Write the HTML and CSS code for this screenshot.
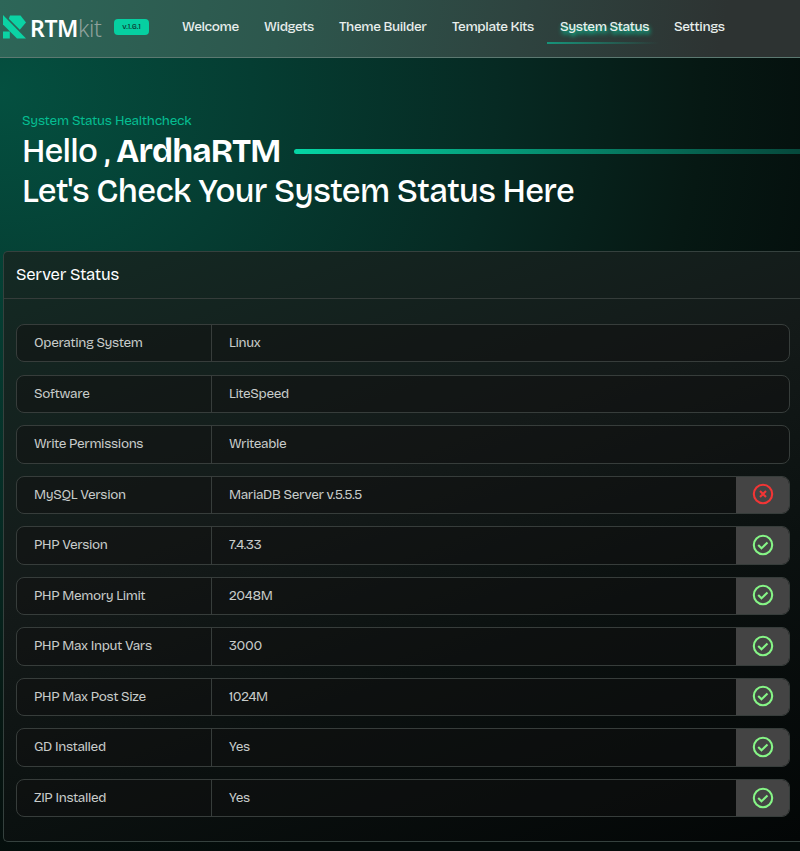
FILE: index.html
```html
<!DOCTYPE html>
<html lang="en">
<head>
<meta charset="utf-8">
<title>RTMkit – System Status</title>
<link rel="stylesheet" href="styles.css">
</head>
<body>
<svg width="0" height="0" class="defs">
  <symbol id="ok" viewBox="0 0 22 22"><circle cx="11" cy="11" r="9.2"/><path d="M6.200 11l3.300 3.200 6-5.600"/></symbol>
  <symbol id="fail" viewBox="0 0 22 22"><circle cx="11" cy="11" r="9.2"/><path d="M8 8l6 6M14 8l-6 6"/></symbol>
</svg>
<header class="topbar">
  <div class="brand">
    <svg class="mark" viewBox="0 0 23 24"><path d="M0 0L23 23.500H14L0 9.500z"/><path d="M7 .5H17.500L23 7.500L16.800 14.700L5.800 3.700z"/><path d="M0 16.500H6.800V23.500H0z"/></svg>
    <span class="name"><b>RTM</b><span class="kit">kit</span></span>
    <span class="version">v.1.6.1</span>
  </div>
  <nav class="nav">
    <a>Welcome</a><a>Widgets</a><a>Theme Builder</a><a>Template Kits</a><a class="active">System Status</a><a>Settings</a>
  </nav>
</header>
<main>
  <section class="hero">
    <p class="eyebrow">System Status Healthcheck</p>
    <div class="hello"><h1>Hello , <b>ArdhaRTM</b></h1><span class="rule"></span></div>
    <h2>Let's Check Your System Status Here</h2>
  </section>
  <section class="panel">
    <h3>Server Status</h3>
    <div class="rows">
      <div class="row"><span class="label">Operating System</span><span class="value">Linux</span></div>
      <div class="row"><span class="label">Software</span><span class="value">LiteSpeed</span></div>
      <div class="row"><span class="label">Write Permissions</span><span class="value">Writeable</span></div>
      <div class="row"><span class="label">MySQL Version</span><span class="value">MariaDB Server v.5.5.5</span><span class="state fail"><svg><use href="#fail"/></svg></span></div>
      <div class="row"><span class="label">PHP Version</span><span class="value">7.4.33</span><span class="state"><svg><use href="#ok"/></svg></span></div>
      <div class="row"><span class="label">PHP Memory Limit</span><span class="value">2048M</span><span class="state"><svg><use href="#ok"/></svg></span></div>
      <div class="row"><span class="label">PHP Max Input Vars</span><span class="value">3000</span><span class="state"><svg><use href="#ok"/></svg></span></div>
      <div class="row"><span class="label">PHP Max Post Size</span><span class="value">1024M</span><span class="state"><svg><use href="#ok"/></svg></span></div>
      <div class="row"><span class="label">GD Installed</span><span class="value">Yes</span><span class="state"><svg><use href="#ok"/></svg></span></div>
      <div class="row"><span class="label">ZIP Installed</span><span class="value">Yes</span><span class="state"><svg><use href="#ok"/></svg></span></div>
    </div>
  </section>
</main>
</body>
</html>
```
FILE: styles.css
```css
* { box-sizing: border-box; margin: 0; }
body {
  height: 851px;
  overflow: hidden;
  font-family: "Bricolage Grotesque", Inter, "Liberation Sans", sans-serif;
  font-weight: 450;
  color: #fff;
  background: radial-gradient(ellipse 900px 800px at 0 90px, #045040 0%, #053d32 28%, #062a23 55%, #061813 78%, #040b0a 100%) #040b0a;
}
.defs { position: absolute; }
.topbar {
  display: flex;
  height: 58px;
  border-bottom: 1px solid #5c7971;
  background: linear-gradient(100deg, #2d6658 0%, #2d574d 35%, #2e433f 65%, #2d3332 90%);
}
.brand { display: flex; align-items: center; width: 169px; height: 54px; padding-left: 3px; flex: none; }
.mark { width: 23px; height: 24px; fill: #0bd3a4; flex: none; }
.name { margin-left: 4px; width: 84px; font-family: "Noto Sans", sans-serif; font-size: 23px; letter-spacing: -0.4px; line-height: 30px; padding-top: 2px; white-space: nowrap; }
.name b { font-weight: 600; }
.kit { font-weight: 300; color: #8fa19c; }
.version { width: 35px; height: 16px; border-radius: 4px; background: #06cfa1; color: #0b4438; font-size: 8px; font-weight: 500; line-height: 16px; text-align: center; }
.nav { display: grid; grid-template-columns: 82px 75px 113px 108px 114px 77px; height: 44px; }
.nav a { padding: 18px 0 0 13px; font-size: 13.5px; line-height: 18px; font-weight: 500; letter-spacing: -.38px; color: #e9efed; white-space: nowrap; }
.nav .active { text-shadow: 1px 3px 4px #00d8a4; background: linear-gradient(90deg, #16947a, transparent) 0 100% / 112px 2px no-repeat; }
.hero { height: 193px; padding: 53px 0 0 22px; }
.eyebrow { font-size: 13.5px; line-height: 20px; letter-spacing: -.23px; color: #05bd91; }
.hello { display: flex; align-items: center; height: 40px; }
h1, h2 { font-size: 33px; line-height: 40px; font-weight: 500; letter-spacing: -.68px; white-space: nowrap; }
h1 { width: 272px; flex: none; letter-spacing: -.8px; }
h1 b { font-weight: 700; }
.rule { flex: 1; height: 5px; border-radius: 3px 0 0 3px; background: linear-gradient(90deg, #05d6a5, #065b4a 85%, #06493c); }
.panel {
  height: 591px;
  margin-left: 3px;
  border: 1px solid #35413e;
  border-right: 0;
  border-radius: 5px 0 0 5px;
  background: linear-gradient(160deg, #142a24 0%, #141a19 40%, #0b1110 65%, #030606 100%);
}
h3 { height: 47px; border-bottom: 1px solid #353c3a; padding-left: 12px; font-size: 16.5px; font-weight: 400; letter-spacing: -.23px; line-height: 45px; }
.rows { display: flex; flex-direction: column; gap: 12.1px; padding: 25px 10px 0 12px; }
.row { display: flex; height: 38.45px; border: 1px solid #373d3b; border-radius: 8px; background: #10101080; overflow: hidden; font-size: 13.5px; letter-spacing: -.35px; line-height: 36px; color: #c8ccca; }
.label { width: 195px; padding-left: 17px; border-right: 1px solid #373d3b; }
.value { flex: 1; padding-left: 17px; }
.state { width: 53px; display: flex; align-items: center; justify-content: center; background: #444; color: #86f586; }
.state svg { width: 22px; height: 22px; fill: none; stroke: currentColor; stroke-width: 2.1; position: relative; top: -.5px; }
.state.fail { color: #f23535; }
```
